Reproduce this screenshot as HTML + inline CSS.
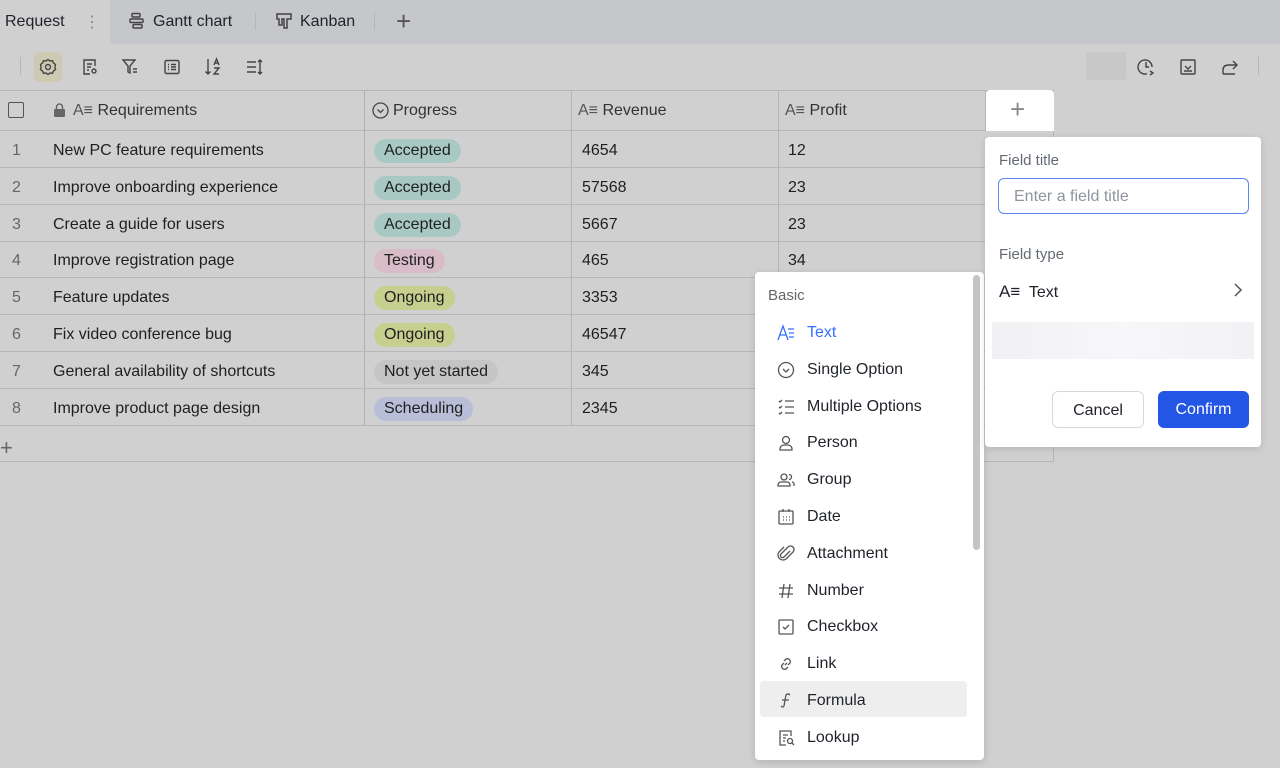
<!DOCTYPE html>
<html><head><meta charset="utf-8"><style>
*{margin:0;padding:0;box-sizing:border-box}
body{width:1280px;height:768px;overflow:hidden;background:#d0d0d0;font-family:"Liberation Sans",sans-serif;color:#1f1f1f;position:relative}
.a{position:absolute}
.tabs{left:0;top:0;width:1280px;height:44px;background:#c6c7ca}
.t{font-size:16px;color:#1f2329;top:12px}
.hl{background:#b7b7b7;width:1px}
.cell{position:absolute;font-size:16px;line-height:36px;white-space:nowrap}
.pill{display:inline-block;line-height:24px;padding:0 10px;border-radius:12px;font-size:16px}
.mi{position:absolute;left:760px;width:207px;height:36px;font-size:16px;line-height:36px;padding-left:47px;color:#1f2329}
.mi svg{position:absolute;left:17px;top:9px}
</style></head><body>
<div class="a tabs"></div>
<div class="a" style="left:0;top:0;width:110px;height:44px;background:#d0d0d0"></div>
<div class="a t" style="left:5px;top:13px">Request</div>
<div class="a t" style="left:84px;color:#888">⋮</div>
<svg class="a" style="left:128px;top:12px" width="18" height="18" viewBox="0 0 18 18" fill="none" stroke="#444" stroke-width="1.5"><rect x="4" y="1.5" width="8" height="3.5" rx="1"/><rect x="2" y="7" width="13" height="3.5" rx="1"/><rect x="5" y="12.5" width="9" height="3.5" rx="1"/></svg>
<div class="a t" style="left:153px;top:13px">Gantt chart</div>
<div class="a hl" style="left:255px;top:12px;height:18px"></div>
<svg class="a" style="left:275px;top:12px" width="18" height="18" viewBox="0 0 18 18" fill="none" stroke="#444" stroke-width="1.5"><path d="M2 2h14v5h-4v9h-3V7H7v6H4V7H2z"/></svg>
<div class="a t" style="left:300px;top:13px">Kanban</div>
<div class="a hl" style="left:374px;top:12px;height:18px"></div>
<div class="a" style="left:396px;top:6px;font-size:26px;color:#555;font-weight:300">+</div>
<div class="a hl" style="left:20px;top:57px;height:18px"></div>
<div class="a" style="left:34px;top:52px;width:28px;height:30px;border-radius:5px;background:#cfc9b4"></div>
<svg class="a" style="left:39px;top:58px" width="18" height="18" viewBox="0 0 18 18" fill="none" stroke="#444" stroke-width="1.4"><circle cx="9" cy="9" r="2.5"/><path d="M9 1.5l2 1.5 2.5-.3 1 2.3 2 1.5-.6 2.5.6 2.5-2 1.5-1 2.3-2.5-.3-2 1.5-2-1.5-2.5.3-1-2.3-2-1.5.6-2.5-.6-2.5 2-1.5 1-2.3 2.5.3z"/></svg>
<svg class="a" style="left:81px;top:58px" width="18" height="18" viewBox="0 0 18 18" fill="none" stroke="#444" stroke-width="1.4"><path d="M14 8V2H3v14h6M6 6h5M6 9h4M6 12h2"/><circle cx="13" cy="13" r="2"/></svg>
<svg class="a" style="left:121px;top:58px" width="18" height="18" viewBox="0 0 18 18" fill="none" stroke="#444" stroke-width="1.4"><path d="M2 2h12l-5 6v7l-2-1V8z M12 11h4M12 14h4"/></svg>
<svg class="a" style="left:163px;top:58px" width="18" height="18" viewBox="0 0 18 18" fill="none" stroke="#444" stroke-width="1.4"><rect x="2" y="2.5" width="14" height="13" rx="1.5"/><path d="M5 6.5h1M8 6.5h5M5 9h1M8 9h5M5 11.5h1M8 11.5h5"/></svg>
<svg class="a" style="left:204px;top:57px" width="18" height="20" viewBox="0 0 18 20" fill="none" stroke="#444" stroke-width="1.4"><path d="M4 2v15M1.5 14.5L4 17l2.5-2.5M10 8l2.5-6 2.5 6M11 6h3M10 11h5l-5 6h5"/></svg>
<svg class="a" style="left:246px;top:58px" width="18" height="18" viewBox="0 0 18 18" fill="none" stroke="#444" stroke-width="1.4"><path d="M1 4h9M1 9h9M1 14h9M14 2v14M12 4l2-2 2 2M12 14l2 2 2-2"/></svg>
<div class="a" style="left:1086px;top:52px;width:40px;height:28px;background:#c8c8c8;border-radius:3px"></div>
<svg class="a" style="left:1137px;top:57px" width="20" height="20" viewBox="0 0 20 20" fill="none" stroke="#444" stroke-width="1.4"><path d="M15 10a7 7 0 1 0-5 6.7M9 5v5h3M13 14l3 2-3 2"/></svg>
<svg class="a" style="left:1179px;top:58px" width="18" height="18" viewBox="0 0 18 18" fill="none" stroke="#444" stroke-width="1.4"><rect x="2" y="2" width="14" height="14" rx="1"/><path d="M6 8l3 3 3-3M5 13h8"/></svg>
<svg class="a" style="left:1220px;top:57px" width="20" height="20" viewBox="0 0 20 20" fill="none" stroke="#444" stroke-width="1.4"><path d="M3 17v-4q0-5 6-5h8M13 4l4 4-4 4M3 17h12"/></svg>
<div class="a hl" style="left:1258px;top:57px;height:18px"></div>
<div class="a" style="left:0;top:90px;width:1054px;height:372px;border:1px solid #b5b5b5;border-left:none"></div>
<div class="a" style="left:986px;top:90px;width:68px;height:41px;background:#fff;border-radius:4px 4px 0 0"></div>
<div class="a" style="left:1010px;top:94px;font-size:26px;color:#888;font-weight:300">+</div>
<div class="a" style="left:0;top:130px;width:986px;height:1px;background:#b5b5b5"></div>
<div class="a" style="left:364px;top:90px;width:1px;height:335px;background:#b0b0b0"></div>
<div class="a" style="left:571px;top:90px;width:1px;height:335px;background:#b5b5b5"></div>
<div class="a" style="left:778px;top:90px;width:1px;height:335px;background:#b5b5b5"></div>
<div class="a" style="left:985px;top:90px;width:1px;height:41px;background:#b5b5b5"></div>
<div class="a" style="left:8px;top:102px;width:16px;height:16px;border:1.5px solid #555;border-radius:2px"></div>
<svg class="a" style="left:53px;top:103px" width="13" height="14" viewBox="0 0 13 14" fill="#666"><rect x="1" y="6" width="11" height="8" rx="1"/><path d="M3.5 6V4a3 3 0 0 1 6 0v2" fill="none" stroke="#666" stroke-width="1.5"/></svg>
<div class="cell" style="left:73px;top:93px;color:#333"><span style="color:#555">A≡</span> Requirements</div>
<svg class="a" style="left:372px;top:102px" width="17" height="17" viewBox="0 0 17 17" fill="none" stroke="#444" stroke-width="1.3"><circle cx="8.5" cy="8.5" r="7.5"/><path d="M5.5 7.5l3 3 3-3"/></svg>
<div class="cell" style="left:393px;top:93px;color:#333">Progress</div>
<div class="cell" style="left:578px;top:93px;color:#333"><span style="color:#555">A≡</span> Revenue</div>
<div class="cell" style="left:785px;top:93px;color:#333"><span style="color:#555">A≡</span> Profit</div>
<div id="rows"></div>
<div class="a" style="left:0;top:448px;font-size:22px;color:#666;line-height:0">+</div>
<div class="a" style="left:755px;top:272px;width:229px;height:488px;background:#fff;border-radius:4px;box-shadow:0 2px 8px rgba(0,0,0,.15)"></div>
<div class="a" style="left:973px;top:275px;width:7px;height:275px;background:#c4c4c4;border-radius:4px"></div>
<div class="a" style="left:768px;top:287px;font-size:15px;color:#666">Basic</div>
<div class="a" style="left:760px;top:681px;width:207px;height:36px;background:#eeeeee;border-radius:4px"></div>
<div class="a" style="left:985px;top:137px;width:276px;height:310px;background:#fff;border-radius:4px;box-shadow:0 2px 8px rgba(0,0,0,.12)"></div>
<div class="a" style="left:999px;top:152px;font-size:15px;color:#646a73">Field title</div>
<div class="a" style="left:998px;top:178px;width:251px;height:36px;border:1px solid #5a87f0;border-radius:6px;font-size:16px;color:#8f959e;line-height:36px;padding-left:15px">Enter a field title</div>
<div class="a" style="left:999px;top:246px;font-size:15px;color:#646a73">Field type</div>
<div class="a" style="left:999px;top:282px;font-size:16px;color:#1f2329"><span style="font-size:17px">A≡</span>&nbsp; Text</div>
<svg class="a" style="left:1233px;top:283px" width="10" height="14" viewBox="0 0 10 14" fill="none" stroke="#555" stroke-width="1.5"><path d="M2 1l6 6-6 6"/></svg>
<div class="a" style="left:992px;top:322px;width:262px;height:37px;background:linear-gradient(90deg,#f1f1f3,#f7f7f9,#f2f2f5)"></div>
<div class="a" style="left:1052px;top:391px;width:92px;height:37px;border:1px solid #d8d8d8;border-radius:6px;font-size:16px;line-height:37px;text-align:center;color:#1f2329">Cancel</div>
<div class="a" style="left:1158px;top:391px;width:91px;height:37px;background:#2456e6;border-radius:6px;font-size:16px;line-height:38px;text-align:center;color:#fff">Confirm</div>
<div id="menu"></div>
<script>
const rows=[["New PC feature requirements","Accepted","4654","12"],["Improve onboarding experience","Accepted","57568","23"],["Create a guide for users","Accepted","5667","23"],["Improve registration page","Testing","465","34"],["Feature updates","Ongoing","3353",""],["Fix video conference bug","Ongoing","46547",""],["General availability of shortcuts","Not yet started","345",""],["Improve product page design","Scheduling","2345",""]];
const col={"Accepted":"#a8c9c3","Testing":"#d8bcc8","Ongoing":"#c7cf8f","Not yet started":"#c5c5c5","Scheduling":"#b8bed8"};
let h="";rows.forEach((r,i)=>{const y=131+i*36.8;const t=y+2;
h+=`<div class="cell" style="left:12px;top:${t}px;color:#666">${i+1}</div><div class="cell" style="left:53px;top:${t}px">${r[0]}</div><div class="cell" style="left:374px;top:${t}px"><span class="pill" style="background:${col[r[1]]}">${r[1]}</span></div><div class="cell" style="left:582px;top:${t}px">${r[2]}</div><div class="cell" style="left:788px;top:${t}px">${r[3]}</div><div class="a" style="left:0;top:${y+36}px;width:986px;height:1px;background:#b8b8b8"></div>`});
document.getElementById("rows").innerHTML=h;
const ic={
Text:'<path d="M1 16L6 2l5 14M3 11h6M11 5h6M12 9h5M12 13h5" stroke="#3370ff"/>',
"Single Option":'<circle cx="9" cy="9" r="7.5"/><path d="M6 8l3 3 3-3"/>',
"Multiple Options":'<path d="M2 3l1 1 2-2M2 9l1 1 2-2M2 15l1 1 2-2M8 3h9M8 9h9M8 15h9"/>',
Person:'<circle cx="9" cy="6" r="3.5"/><path d="M3 16v-1a4 4 0 0 1 4-4h4a4 4 0 0 1 4 4v1z"/>',
Group:'<circle cx="7" cy="6" r="3"/><path d="M1 15v-1a3 3 0 0 1 3-3h6a3 3 0 0 1 3 3v1zM12 3.5a2.5 2.5 0 0 1 0 5M15 11a2 2 0 0 1 2 2v2"/>',
Date:'<rect x="2" y="3" width="14" height="13" rx="1"/><path d="M6 1v3M12 1v3M6 9h1M9 9h1M12 9h1M6 12h1M9 12h1M12 12h1"/>',
Attachment:'<path d="M13 6l-6 6a2 2 0 0 1-3-3l7-7a3.5 3.5 0 0 1 5 5l-7 7a5 5 0 0 1-7-7l5-5"/>',
Number:'<path d="M7 2L5 16M13 2l-2 14M2 6h14M2 12h14"/>',
Checkbox:'<rect x="2" y="2" width="14" height="14" rx="1"/><path d="M6 9l2 2 4-4"/>',
Link:'<path d="M8 10l2-2M7 6l2-2a3 3 0 0 1 4 4l-2 2M11 12l-2 2a3 3 0 0 1-4-4l2-2"/>',
Formula:'<path d="M13 3q-2-2-4 0l-1 5-1 6q-1 2-3 0M5 8h7"/>',
Lookup:'<path d="M14 7V2H3v14h6M6 6h5M6 9h3M6 12h2"/><circle cx="13" cy="12" r="2.5"/><path d="M15 14l2 2"/>'};
let m="";Object.keys(ic).forEach((k,i)=>{const y=315+i*36.8;
m+=`<div class="mi" style="top:${y}px;${k=='Text'?'color:#3370ff':''}"><svg width="18" height="18" viewBox="0 0 18 18" fill="none" stroke="#555" stroke-width="1.3">${ic[k]}</svg>${k}</div>`});
document.getElementById("menu").innerHTML=m;
</script>
</body></html>
